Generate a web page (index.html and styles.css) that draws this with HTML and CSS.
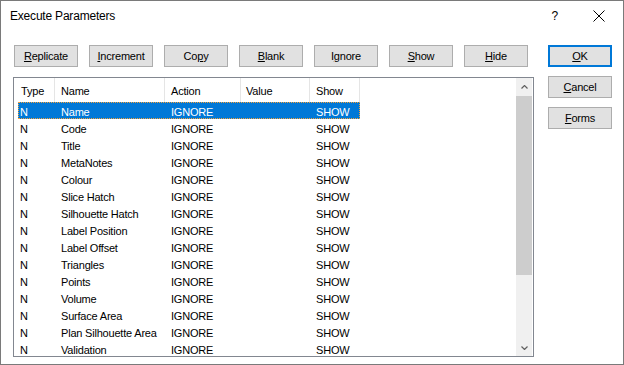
FILE: index.html
```html
<!DOCTYPE html>
<html>
<head>
<meta charset="utf-8">
<title>Execute Parameters</title>
<link rel="stylesheet" href="styles.css">
</head>
<body>
<div class="window">
  <div class="titlebar">
    <span class="title">Execute Parameters</span>
    <span class="help">?</span>
    <span class="close"><svg width="12" height="12" viewBox="0 0 12 12"><path d="M0.5 0.5 L11.5 11.5 M11.5 0.5 L0.5 11.5" stroke="#000" stroke-width="1" fill="none"/></svg></span>
  </div>
  <div class="main">
    <div class="left">
      <div class="toolbar">
        <button class="btn"><u>R</u>eplicate</button>
        <button class="btn"><u>I</u>ncrement</button>
        <button class="btn">Co<u>p</u>y</button>
        <button class="btn"><u>B</u>lank</button>
        <button class="btn">I<u>g</u>nore</button>
        <button class="btn"><u>S</u>how</button>
        <button class="btn"><u>H</u>ide</button>
      </div>
      <div class="list">
        <div class="content">
          <div class="header">
            <div class="hcol c-type">Type</div>
            <div class="hcol c-name">Name</div>
            <div class="hcol c-action">Action</div>
            <div class="hcol c-value">Value</div>
            <div class="hcol c-show">Show</div>
          </div>
          <div class="row selected"><span class="cell r-type">N</span><span class="cell r-name">Name</span><span class="cell r-action">IGNORE</span><span class="cell r-value"></span><span class="cell r-show">SHOW</span></div>
          <div class="row"><span class="cell r-type">N</span><span class="cell r-name">Code</span><span class="cell r-action">IGNORE</span><span class="cell r-value"></span><span class="cell r-show">SHOW</span></div>
          <div class="row"><span class="cell r-type">N</span><span class="cell r-name">Title</span><span class="cell r-action">IGNORE</span><span class="cell r-value"></span><span class="cell r-show">SHOW</span></div>
          <div class="row"><span class="cell r-type">N</span><span class="cell r-name">MetaNotes</span><span class="cell r-action">IGNORE</span><span class="cell r-value"></span><span class="cell r-show">SHOW</span></div>
          <div class="row"><span class="cell r-type">N</span><span class="cell r-name">Colour</span><span class="cell r-action">IGNORE</span><span class="cell r-value"></span><span class="cell r-show">SHOW</span></div>
          <div class="row"><span class="cell r-type">N</span><span class="cell r-name">Slice Hatch</span><span class="cell r-action">IGNORE</span><span class="cell r-value"></span><span class="cell r-show">SHOW</span></div>
          <div class="row"><span class="cell r-type">N</span><span class="cell r-name">Silhouette Hatch</span><span class="cell r-action">IGNORE</span><span class="cell r-value"></span><span class="cell r-show">SHOW</span></div>
          <div class="row"><span class="cell r-type">N</span><span class="cell r-name">Label Position</span><span class="cell r-action">IGNORE</span><span class="cell r-value"></span><span class="cell r-show">SHOW</span></div>
          <div class="row"><span class="cell r-type">N</span><span class="cell r-name">Label Offset</span><span class="cell r-action">IGNORE</span><span class="cell r-value"></span><span class="cell r-show">SHOW</span></div>
          <div class="row"><span class="cell r-type">N</span><span class="cell r-name">Triangles</span><span class="cell r-action">IGNORE</span><span class="cell r-value"></span><span class="cell r-show">SHOW</span></div>
          <div class="row"><span class="cell r-type">N</span><span class="cell r-name">Points</span><span class="cell r-action">IGNORE</span><span class="cell r-value"></span><span class="cell r-show">SHOW</span></div>
          <div class="row"><span class="cell r-type">N</span><span class="cell r-name">Volume</span><span class="cell r-action">IGNORE</span><span class="cell r-value"></span><span class="cell r-show">SHOW</span></div>
          <div class="row"><span class="cell r-type">N</span><span class="cell r-name">Surface Area</span><span class="cell r-action">IGNORE</span><span class="cell r-value"></span><span class="cell r-show">SHOW</span></div>
          <div class="row"><span class="cell r-type">N</span><span class="cell r-name">Plan Silhouette Area</span><span class="cell r-action">IGNORE</span><span class="cell r-value"></span><span class="cell r-show">SHOW</span></div>
          <div class="row"><span class="cell r-type">N</span><span class="cell r-name">Validation</span><span class="cell r-action">IGNORE</span><span class="cell r-value"></span><span class="cell r-show">SHOW</span></div>
        </div>
        <div class="scrollbar">
          <div class="sb-btn"><svg width="7" height="4" viewBox="0 0 7 4"><path d="M0.5 3.5 L3.5 0.5 L6.5 3.5" stroke="#606060" stroke-width="1.2" fill="none"/></svg></div>
          <div class="thumb"></div>
          <div class="track"></div>
          <div class="sb-btn"><svg width="7" height="4" viewBox="0 0 7 4"><path d="M0.5 0.5 L3.5 3.5 L6.5 0.5" stroke="#606060" stroke-width="1.2" fill="none"/></svg></div>
        </div>
      </div>
    </div>
    <div class="right">
      <button class="btn ok"><u>O</u>K</button>
      <button class="btn"><u>C</u>ancel</button>
      <button class="btn"><u>F</u>orms</button>
    </div>
  </div>
</div>
</body>
</html>
```

FILE: styles.css
```css
html, body {
  margin: 0;
  padding: 0;
  background: #ffffff;
}

body {
  font-family: "Liberation Sans", Arial, sans-serif;
  font-size: 11px;
  letter-spacing: -0.2px;
  color: #000;
}

.window {
  box-sizing: border-box;
  width: 624px;
  height: 365px;
  border: 1px solid #7a7a7a;
  background: #ffffff;
  overflow: hidden;
}

.titlebar {
  height: 30px;
  display: flex;
  align-items: center;
}

.title {
  font-size: 12px;
  padding-left: 9px;
  padding-bottom: 1px;
}

.help {
  margin-left: auto;
  font-size: 12px;
  padding-bottom: 1px;
}

.close {
  display: flex;
  margin-left: 35px;
  margin-right: 18px;
}

.main {
  display: flex;
  padding: 14px 0 0 12px;
  gap: 14px;
}

.left {
  width: 521px;
}

.toolbar {
  display: flex;
  gap: 11px;
  padding-left: 1px;
  margin-bottom: 10px;
}

.btn {
  box-sizing: border-box;
  width: 64px;
  height: 22px;
  margin: 0;
  padding: 0;
  border: 1px solid #adadad;
  background: #e1e1e1;
  font-family: inherit;
  font-size: 11px;
  letter-spacing: -0.2px;
  color: #000;
  text-align: center;
  line-height: 20px;
}

.btn.ok {
  border: 2px solid #0078d7;
  line-height: 18px;
}

.btn u {
  text-underline-offset: 1px;
}

.right {
  display: flex;
  flex-direction: column;
  gap: 9px;
  width: 64px;
}

.list {
  box-sizing: border-box;
  width: 521px;
  height: 280px;
  border: 1px solid #828790;
  display: flex;
  overflow: hidden;
}

.content {
  flex: 1;
  overflow: hidden;
}

.header {
  display: flex;
  height: 24px;
}

.hcol {
  box-sizing: border-box;
  border-right: 1px solid #e5e5e5;
  padding-top: 1px;
  line-height: 24px;
  white-space: nowrap;
}

.c-type { width: 41px; padding-left: 7px; }
.c-name { width: 110px; padding-left: 6px; }
.c-action { width: 76px; padding-left: 6px; }
.c-value { width: 69px; padding-left: 5px; }
.c-show { width: 50px; padding-left: 6px; }

.row {
  display: flex;
  box-sizing: border-box;
  height: 17px;
  width: 342px;
  margin-left: 4px;
  white-space: nowrap;
}

.row.selected {
  background: #0078d7;
  color: #ffffff;
  outline: 1px dotted #f4a23a;
  outline-offset: -1px;
}

.cell {
  box-sizing: border-box;
  display: block;
  height: 17px;
  padding-top: 2px;
  line-height: 17px;
}

.r-type { width: 37px; padding-left: 2px; }
.r-name { width: 110px; padding-left: 6px; }
.r-action { width: 76px; padding-left: 6px; }
.r-value { width: 69px; padding-left: 5px; }
.r-show { width: 50px; padding-left: 6px; }

.scrollbar {
  width: 16px;
  margin-right: 1px;
  background: #f0f0f0;
  display: flex;
  flex-direction: column;
}

.sb-btn {
  height: 17px;
  display: flex;
  align-items: center;
  justify-content: center;
}

.thumb {
  height: 179px;
  margin-top: 1px;
  background: #cdcdcd;
}

.track {
  flex: 1;
}
```
